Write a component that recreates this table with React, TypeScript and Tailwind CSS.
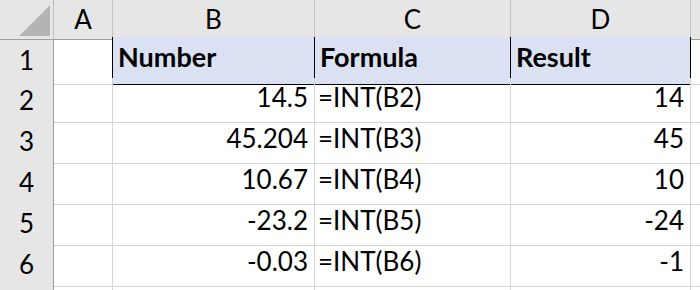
import React from "react";

const cols = ["A", "B", "C", "D"];

const rows: { n: number; b: string; c: string; d: string }[] = [
  { n: 2, b: "14.5", c: "=INT(B2)", d: "14" },
  { n: 3, b: "45.204", c: "=INT(B3)", d: "45" },
  { n: 4, b: "10.67", c: "=INT(B4)", d: "10" },
  { n: 5, b: "-23.2", c: "=INT(B5)", d: "-24" },
  { n: 6, b: "-0.03", c: "=INT(B6)", d: "-1" },
];

const grid = "grid grid-cols-[54px_59px_202px_196px_180px_1fr]";
const font = "font-['Lato','Noto_Sans',sans-serif]";

function RowHead({ n }: { n: number | string }) {
  return (
    <div className="h-full flex items-center justify-center bg-[#e6e6e6] border-r border-r-[#9e9e9e] border-b border-b-[#c0c0c0] text-[26px] text-black">
      {n}
    </div>
  );
}

export default function App() {
  return (
    <div className={`w-[700px] h-[290px] overflow-hidden bg-white text-black ${font}`}>
      {/* column headers */}
      <div className={`${grid} h-[37px]`}>
        <div className="relative bg-[#e6e6e6] border-r border-r-[#c0c0c0] border-b border-b-[#9e9e9e]">
          <svg className="absolute right-[3px] bottom-[3px]" width="31" height="31" viewBox="0 0 31 31">
            <polygon points="31,0 31,31 0,31" fill="#b4b4b4" />
          </svg>
        </div>
        {cols.map((c) => (
          <div
            key={c}
            className="flex items-center justify-center bg-[#e6e6e6] border-r border-r-[#c0c0c0] border-b border-b-[#9e9e9e] text-[26px] text-black"
          >
            {c}
          </div>
        ))}
        <div className="bg-[#e6e6e6] border-b border-b-[#9e9e9e]" />
      </div>

      {/* row 1 */}
      <div className={`${grid} h-[41px] text-[27px]`}>
        <RowHead n={1} />
        <div className="border-r border-r-black border-b border-b-[#d4d4d4]" />
        <div className="flex items-end pb-[6px] pl-[5px] font-bold bg-[#d9e1f2] border-r border-r-black border-b border-b-black">
          Number
        </div>
        <div className="flex items-end pb-[6px] pl-[5px] font-bold bg-[#d9e1f2] border-r border-r-black border-b border-b-black">
          Formula
        </div>
        <div className="flex items-end pb-[6px] pl-[5px] font-bold bg-[#d9e1f2] border-r border-r-black border-b border-b-black">
          Result
        </div>
        <div className="border-b border-b-[#d4d4d4]" />
      </div>

      {rows.map((r) => (
        <div key={r.n} className={`${grid} h-[41px] text-[26px]`}>
          <RowHead n={r.n} />
          <div className="border-r border-r-[#d4d4d4] border-b border-b-[#d4d4d4]" />
          <div className="flex items-end justify-end pb-[5px] pr-[6px] border-r border-r-[#d4d4d4] border-b border-b-[#d4d4d4]">
            {r.b}
          </div>
          <div className="flex items-end pb-[5px] pl-[3px] border-r border-r-[#d4d4d4] border-b border-b-[#d4d4d4]">
            {r.c}
          </div>
          <div className="flex items-end justify-end pb-[5px] pr-[6px] border-r border-r-[#d4d4d4] border-b border-b-[#d4d4d4]">
            {r.d}
          </div>
          <div className="border-b border-b-[#d4d4d4]" />
        </div>
      ))}

      {/* partial row 7 */}
      <div className={`${grid} h-[41px]`}>
        <div className="bg-[#e6e6e6] border-r border-r-[#9e9e9e]" />
        <div className="border-r border-r-[#d4d4d4]" />
        <div className="border-r border-r-[#d4d4d4]" />
        <div className="border-r border-r-[#d4d4d4]" />
        <div className="border-r border-r-[#d4d4d4]" />
        <div />
      </div>
    </div>
  );
}
